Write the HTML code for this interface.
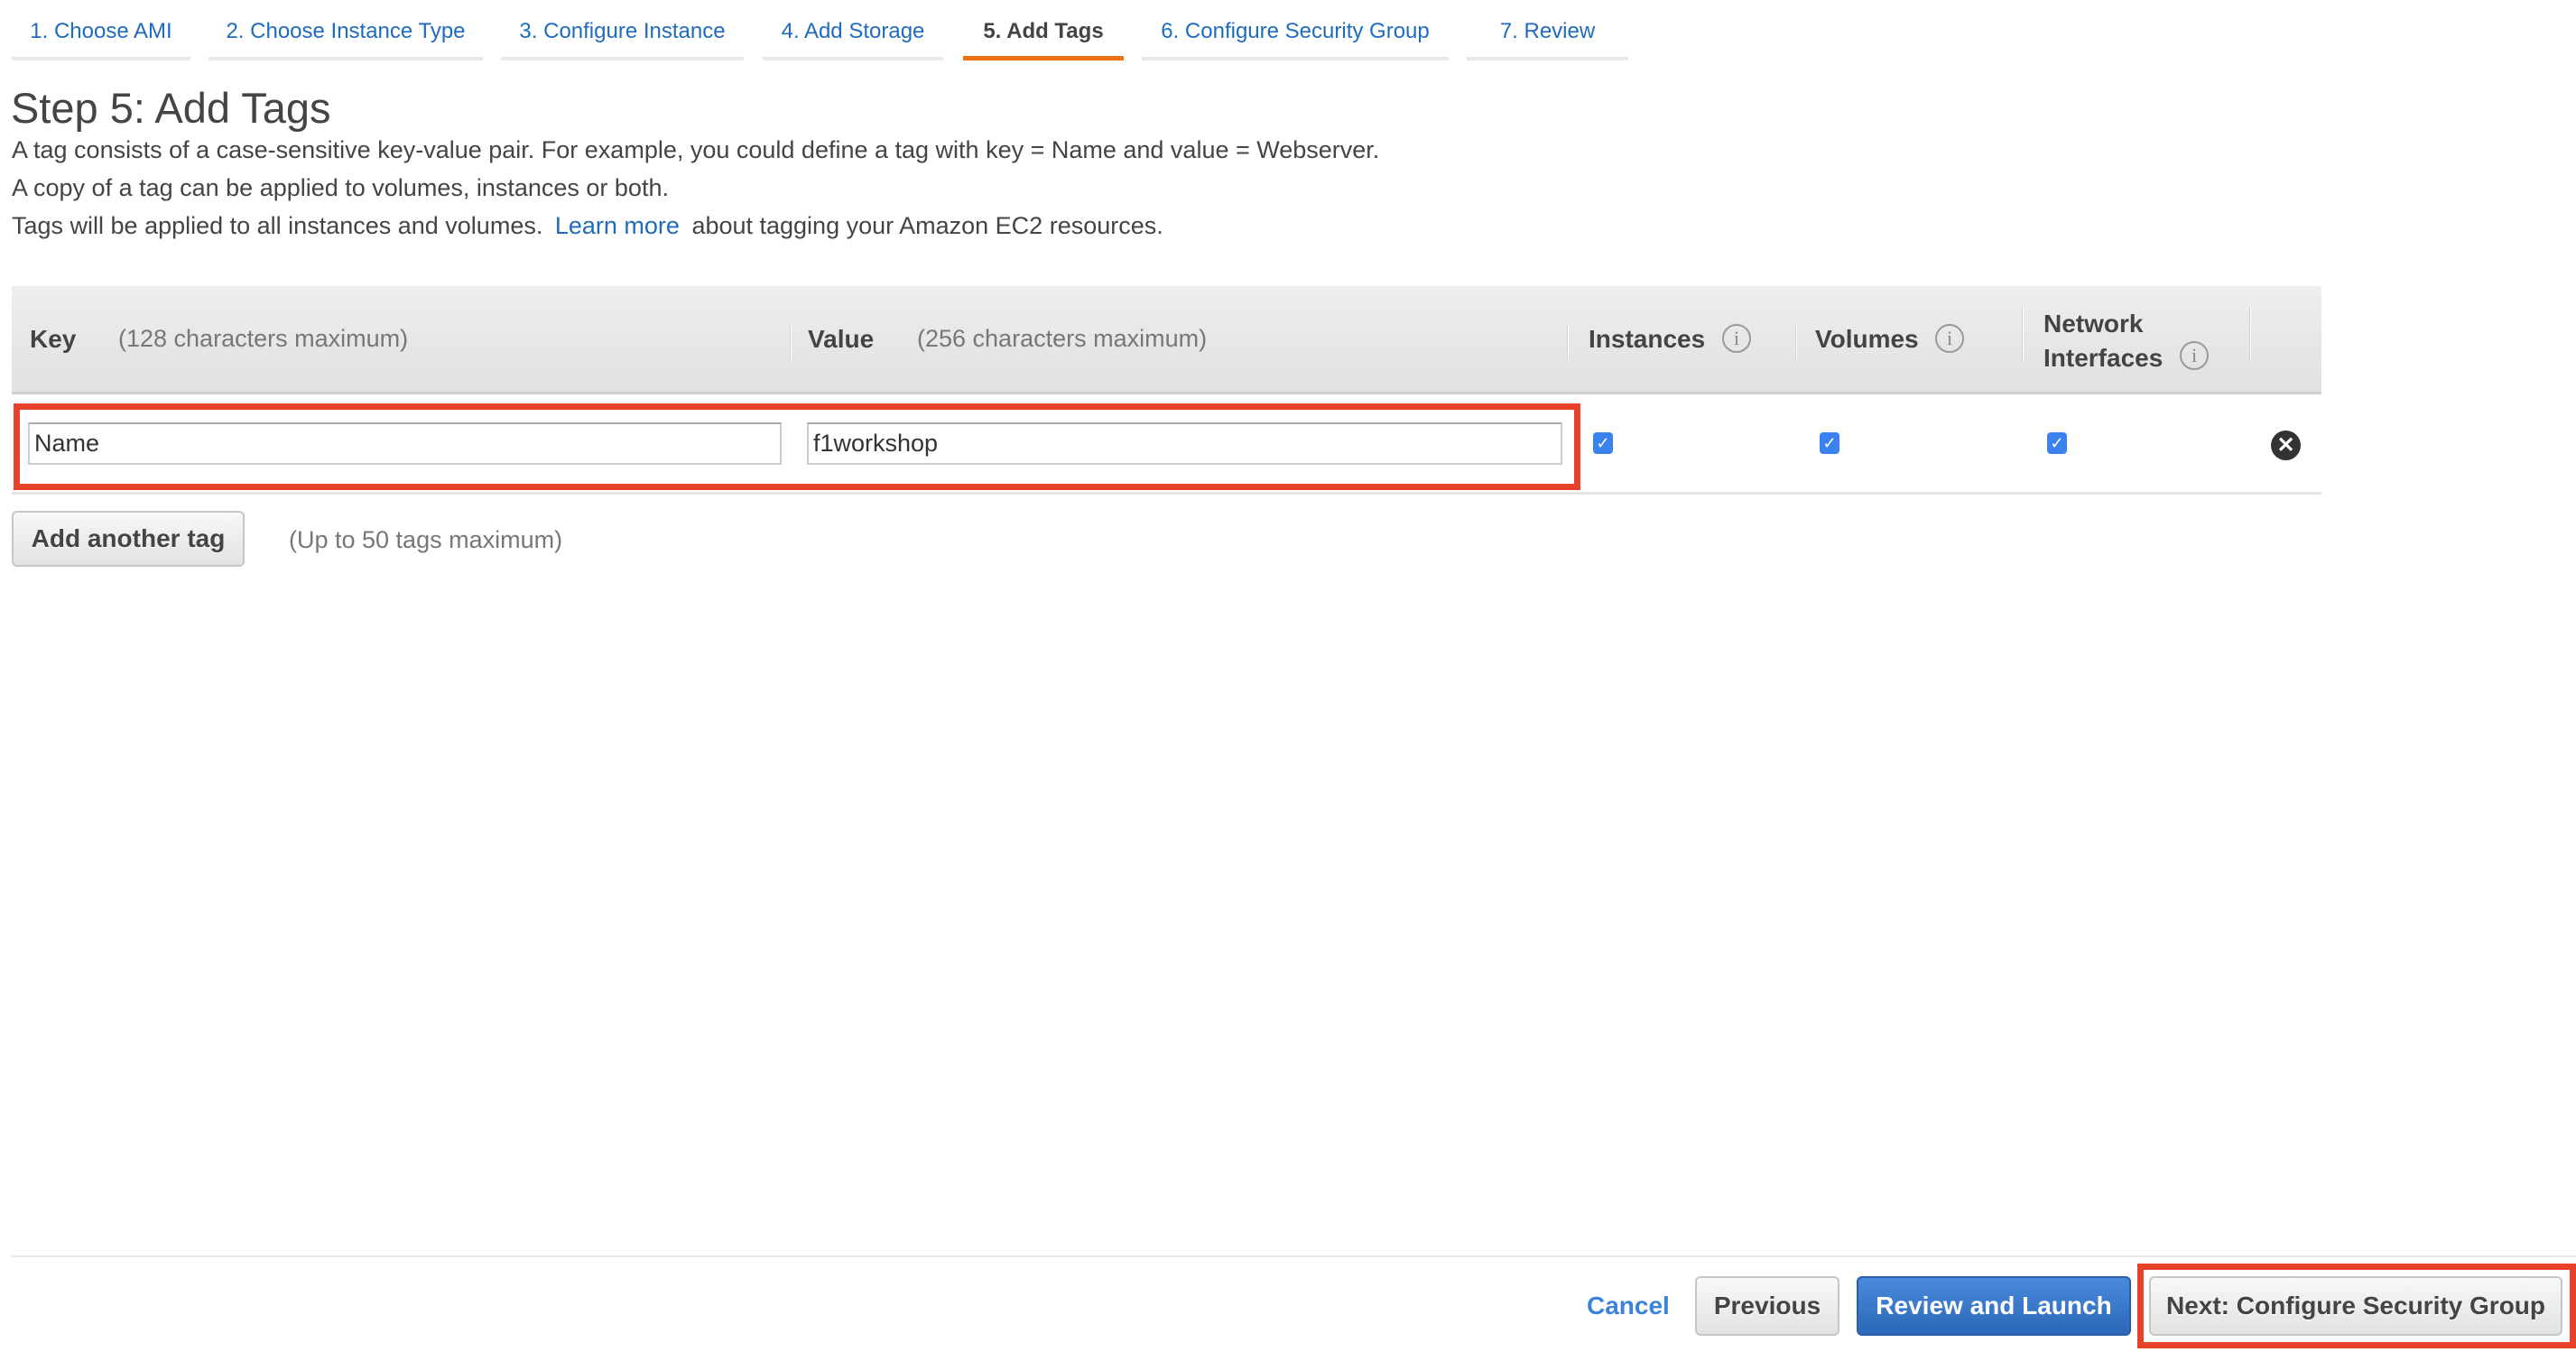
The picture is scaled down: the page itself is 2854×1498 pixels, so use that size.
<!DOCTYPE html>
<html><head><meta charset="utf-8"><style>
*{margin:0;padding:0;box-sizing:border-box}
body{width:2854px;height:1498px;background:#fff;font-family:"Liberation Sans",Arial,sans-serif;color:#444;position:relative;overflow:hidden}
.a{position:absolute;white-space:nowrap}
.tab{position:absolute;top:0;height:67px;border-bottom:4px solid #e9e9e9;color:#1f6bbd;font-size:24px;text-align:center;line-height:70px}
.tab.act{border-bottom:5px solid #ec7211;color:#444;font-weight:bold}
.p{font-size:27px;color:#444}
.hdr{position:absolute;left:13px;top:317px;width:2559px;height:120px;background:linear-gradient(#eeeeee,#e1e1e1);border-bottom:3px solid #d0d0d0}
.div{position:absolute;top:42px;height:40px;width:2px;background:#fff;border-left:1px solid #d2d2d2}
.ht{position:absolute;font-size:28px;font-weight:bold;color:#444;white-space:nowrap}
.hg{position:absolute;font-size:27px;color:#777;white-space:nowrap}
.info{position:absolute;width:32px;height:32px;border:2px solid #999;border-radius:50%;color:#888;font-size:22px;text-align:center;line-height:28px;font-family:"Liberation Serif",serif}
.inp{position:absolute;height:47px;border:2px solid #ccc;border-top-color:#aaa;background:#fff;font-size:27px;line-height:43px;padding-left:5px;color:#333}
.cb{position:absolute;width:22px;height:24px;background:#3b82f0;border-radius:4px;color:#fff;font-size:18px;text-align:center;line-height:24px}
.btn{position:absolute;border:2px solid #c6c6c6;border-radius:6px;background:linear-gradient(#f8f8f8,#e2e2e2);font-size:28px;font-weight:bold;color:#444;text-align:center;text-shadow:0 1px 0 #fff}
</style></head><body>
<div class="tab" style="left:13px;width:198px">1. Choose AMI</div>
<div class="tab" style="left:231px;width:304px">2. Choose Instance Type</div>
<div class="tab" style="left:555px;width:269px">3. Configure Instance</div>
<div class="tab" style="left:845px;width:200px">4. Add Storage</div>
<div class="tab act" style="left:1067px;width:178px">5. Add Tags</div>
<div class="tab" style="left:1265px;width:340px">6. Configure Security Group</div>
<div class="tab" style="left:1625px;width:179px">7. Review</div>

<div class="a" style="left:12px;top:92px;font-size:47px;color:#444">Step 5: Add Tags</div>
<div class="a p" style="left:13px;top:151px">A tag consists of a case-sensitive key-value pair. For example, you could define a tag with key = Name and value = Webserver.</div>
<div class="a p" style="left:13px;top:193px">A copy of a tag can be applied to volumes, instances or both.</div>
<div class="a p" style="left:13px;top:235px">Tags will be applied to all instances and volumes. <span style="color:#1f6bbd;margin-left:6px">Learn more</span> <span style="margin-left:6px">about tagging your Amazon EC2 resources.</span></div>

<div class="hdr">
<div class="ht" style="left:20px;top:43px">Key</div>
<div class="hg" style="left:118px;top:43px">(128 characters maximum)</div>
<div class="div" style="left:862px"></div>
<div class="ht" style="left:882px;top:43px">Value</div>
<div class="hg" style="left:1003px;top:43px">(256 characters maximum)</div>
<div class="div" style="left:1723px"></div>
<div class="ht" style="left:1747px;top:43px">Instances</div>
<div class="info" style="left:1895px;top:42px">i</div>
<div class="div" style="left:1976px"></div>
<div class="ht" style="left:1998px;top:43px">Volumes</div>
<div class="info" style="left:2131px;top:42px">i</div>
<div class="div" style="left:2227px;top:22px;height:62px"></div>
<div class="ht" style="left:2251px;top:23px;line-height:38px">Network<br>Interfaces</div>
<div class="info" style="left:2402px;top:61px">i</div>
<div class="div" style="left:2479px;top:22px;height:62px"></div>
</div>

<div class="a" style="left:15px;top:447px;width:1736px;height:96px;border:7px solid #e8412a"></div>
<div class="inp" style="left:31px;top:468px;width:835px">Name</div>
<div class="inp" style="left:894px;top:468px;width:837px">f1workshop</div>
<div class="cb" style="left:1765px;top:479px">✓</div>
<div class="cb" style="left:2016px;top:479px">✓</div>
<div class="cb" style="left:2268px;top:479px">✓</div>
<div class="a" style="left:2516px;top:477px;width:33px;height:33px;border-radius:50%;background:#333;color:#fff;font-size:24px;font-weight:bold;text-align:center;line-height:33px">✕</div>
<div class="a" style="left:13px;top:545px;width:2559px;height:3px;background:#e4e4e4"></div>

<div class="btn" style="left:13px;top:566px;width:258px;height:62px;line-height:58px">Add another tag</div>
<div class="a" style="left:320px;top:583px;font-size:27px;color:#777">(Up to 50 tags maximum)</div>

<div class="a" style="left:13px;top:1391px;width:2841px;height:2px;background:#e6e6e6"></div>
<div class="a" style="left:1758px;top:1431px;font-size:28px;font-weight:bold;color:#3a84db">Cancel</div>
<div class="btn" style="left:1878px;top:1414px;width:160px;height:66px;line-height:62px">Previous</div>
<div class="btn" style="left:2057px;top:1414px;width:304px;height:66px;line-height:62px;background:linear-gradient(#4a8bdc,#2c67b8);border-color:#2a5fa8;color:#fff;text-shadow:none">Review and Launch</div>
<div class="a" style="left:2368px;top:1400px;width:486px;height:94px;border:7px solid #e8412a"></div>
<div class="btn" style="left:2381px;top:1414px;width:458px;height:66px;line-height:62px">Next: Configure Security Group</div>
</body></html>
